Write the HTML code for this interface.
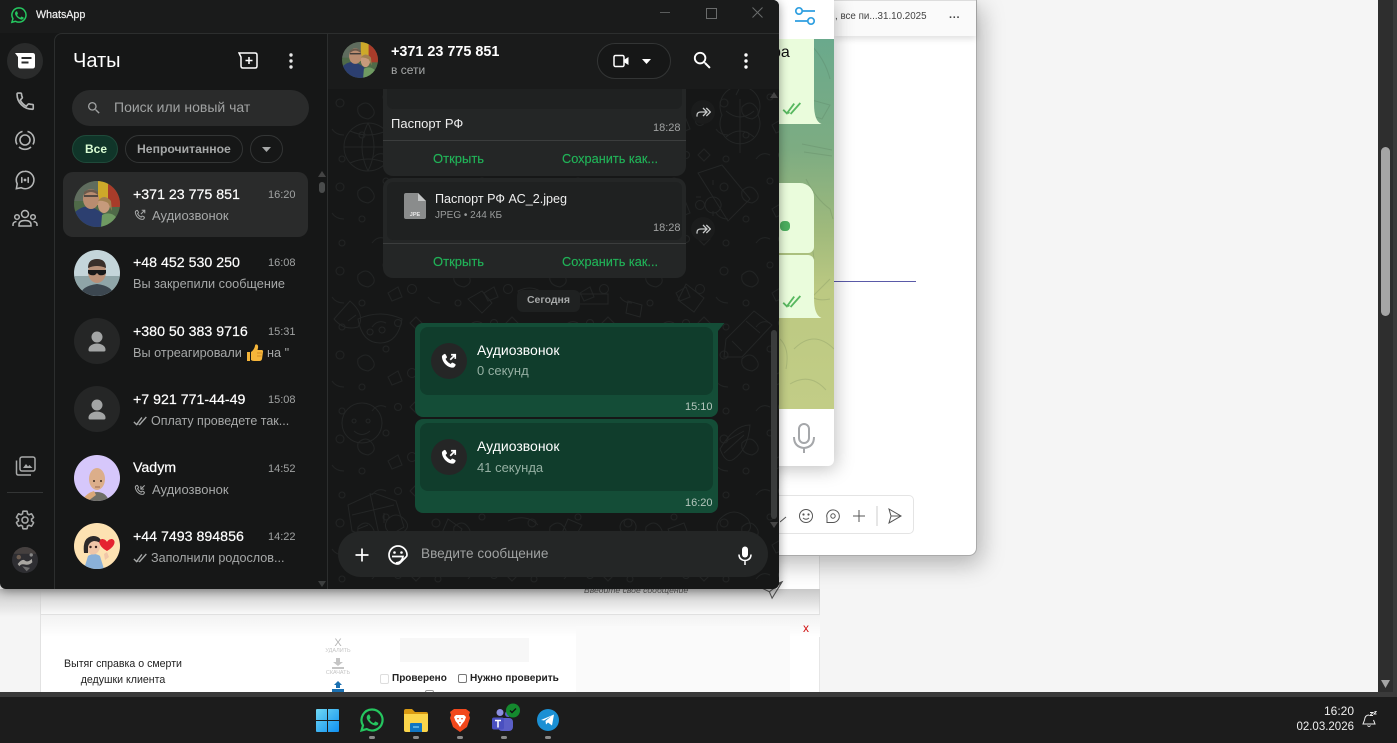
<!DOCTYPE html>
<html lang="ru"><head><meta charset="utf-8"><title>WhatsApp</title>
<style>
html,body{margin:0;padding:0;width:1397px;height:743px;overflow:hidden;background:#f5f5f5;font-family:"Liberation Sans","Noto Sans CJK SC",sans-serif}
div,span,svg{position:absolute}
.t{white-space:nowrap;line-height:16px;height:16px}
.n{color:#fff;font-size:14.2px;-webkit-text-stroke:.2px #fff}
.s{color:#a6a8a8;font-size:12.7px}
.m{color:#a0a2a2;font-size:11.5px}
.g{color:#21b358;font-size:13px;-webkit-text-stroke:.15px #21b358}
.tm{color:#a0a2a2;font-size:11px}
</style></head><body>

<svg width="0" height="0" style="left:0;top:0">
<defs>
<clipPath id="c"><circle cx="23" cy="23" r="23"/></clipPath>
<symbol id="av1" viewBox="0 0 46 46"><g clip-path="url(#c)"><rect width="46" height="46" fill="#4f6a48"/><rect x="23" width="12" height="24" fill="#cda92a"/><rect x="34" width="12" height="26" fill="#a83c2a"/><rect width="24" height="20" fill="#5f6c5e"/><path d="M0 46V32q8-8 16-6t14 8l2 12z" fill="#2c3f70"/><ellipse cx="17" cy="18" rx="8" ry="10" fill="#b98c70"/><path d="M10 14q7-6 14 0l0-3q-7-5-14 0z" fill="#6b5a4c"/><path d="M10 15h14" stroke="#333" stroke-width="1.500"/><ellipse cx="30" cy="24" rx="6" ry="8" fill="#c69a7c"/><path d="M24 20q6-8 13 0l1 10-4-8q-5-3-10-2z" fill="#a08050"/><path d="M27 46l1-12q8-4 14 2l0 10z" fill="#6f9a62"/></g></symbol>
<symbol id="av2" viewBox="0 0 46 46"><g clip-path="url(#c)"><rect width="46" height="46" fill="#c4d5da"/><rect y="26" width="46" height="20" fill="#8fa5a8"/><path d="M6 46q1-10 17-12 16 2 17 12z" fill="#3c4750"/><ellipse cx="23" cy="22" rx="9" ry="11" fill="#b89078"/><path d="M14 18q0-9 9-9t9 9q-9-4-18 0z" fill="#3a2f2a"/><path d="M14 20h18v3q-2 3-7 2l-2-2-2 2q-5 1-7-2z" fill="#17181a"/></g></symbol>
<symbol id="avp" viewBox="0 0 46 46"><g clip-path="url(#c)"><rect width="46" height="46" fill="#252626"/><circle cx="23" cy="19" r="5.500" fill="#a3a5a5"/><path d="M14.500 31.500c0-4 5-6 8.500-6s8.500 2 8.500 6v.5q0 1.500-1.500 1.500H16q-1.500 0-1.500-1.500z" fill="#a3a5a5"/></g></symbol>
<symbol id="av3" viewBox="0 0 46 46"><g clip-path="url(#c)"><rect width="46" height="46" fill="#d6c7fb"/><path d="M12 46q3-9 11-9 9 0 12 9z" fill="#6e6e66"/><path d="M9 44q4-6 11-8l2 4-8 6z" fill="#d9a878"/><ellipse cx="23" cy="24" rx="8" ry="11" fill="#dcae8a"/><circle cx="20" cy="26" r="1" fill="#3c2a20"/><circle cx="27" cy="26" r="1" fill="#3c2a20"/><path d="M21 32h5" stroke="#9a6a50"/></g></symbol>
<symbol id="av4" viewBox="0 0 46 46"><g clip-path="url(#c)"><rect width="46" height="46" fill="#fde2b2"/><path d="M10 46l4-13q6-4 12 0l4 13z" fill="#8ab0d8"/><ellipse cx="19" cy="23" rx="7" ry="8.500" fill="#f0c6a8"/><path d="M10 30q-2-16 9-17 9 0 9 10-2-5-8-5-5 1-6 6l0 6z" fill="#2d2a2a"/><circle cx="16.500" cy="24" r="1.200" fill="#392420"/><circle cx="22" cy="24" r="1.200" fill="#392420"/><path d="M33 28c-9-5-9-11-5-12 2 0 4 1 5 3 1-2 3-3 5-3 4 1 4 7-5 12z" fill="#e52330"/><path d="M30 31l3-2 2 5-4 3z" fill="#f0c6a8"/></g></symbol>
<symbol id="av5" viewBox="0 0 46 46"><g clip-path="url(#c)"><rect width="46" height="46" fill="#2e2e32"/><rect y="0" width="46" height="12" fill="#45403f"/><path d="M10 30q8-10 13-6t12-3l1 6q-6 6-13 4t-10 3z" fill="#a9a7a2"/><circle cx="12" cy="18" r="4" fill="#6c5c50"/><circle cx="34" cy="14" r="3" fill="#888"/><path d="M18 34l14 3-6 6z" fill="#6d6d6d"/></g></symbol>
<symbol id="call" viewBox="0 0 24 24"><path fill="currentColor" d="M6.600 3.600c.5-.2 1 0 1.300.5l1.500 2.700c.3.500.2 1.100-.2 1.500L7.900 9.500c.9 2.300 3.600 5 6.100 6.100l1.200-1.300c.4-.4 1-.5 1.500-.2l2.700 1.500c.5.3.7.8.5 1.300-.5 1.500-1.900 3.100-3.500 3.100C10.200 20 4 13.800 3.500 7.100 3.500 5.500 5.100 4.100 6.600 3.600z"/><path fill="none" stroke="currentColor" stroke-width="2" d="M13.500 10.500L19.500 4.500M14.500 4.500h5v5"/></symbol>
<symbol id="callo" viewBox="0 0 24 24"><path fill="none" stroke="currentColor" stroke-width="1.800" d="M6.600 4.200c.5-.2 1 0 1.300.5l1.300 2.300c.3.500.2 1.100-.2 1.500L7.900 9.500c.9 2.300 3.600 5 6.100 6.100l1.200-1.300c.4-.4 1-.5 1.500-.2l2.300 1.300c.5.3.7.8.5 1.300-.5 1.400-1.700 2.800-3.100 2.800C10.200 19.500 4.500 13.800 4 7.300 4 5.900 5.200 4.700 6.600 4.200z"/><path fill="none" stroke="currentColor" stroke-width="1.800" d="M13.500 10.500L20 4M15 3.800h5.200V9"/></symbol>
<symbol id="calli" viewBox="0 0 24 24"><path fill="none" stroke="currentColor" stroke-width="1.800" d="M6.600 4.200c.5-.2 1 0 1.300.5l1.300 2.300c.3.500.2 1.100-.2 1.500L7.900 9.500c.9 2.300 3.600 5 6.100 6.100l1.200-1.300c.4-.4 1-.5 1.500-.2l2.300 1.300c.5.3.7.8.5 1.300-.5 1.400-1.700 2.800-3.100 2.800C10.200 19.500 4.500 13.800 4 7.300 4 5.900 5.200 4.700 6.600 4.200z"/><path fill="none" stroke="currentColor" stroke-width="1.800" d="M20 4l-6.500 6.500M13.500 5v5.500H19"/></symbol>
<symbol id="dc" viewBox="0 0 18 12"><path fill="none" stroke="currentColor" stroke-width="1.500" d="M1 7l3 3 6-8M7 10.500L15 1.500M5 9l1 1"/></symbol>
<symbol id="fwd" viewBox="0 0 24 24"><path fill="none" stroke="#c8caca" stroke-width="1.900" d="M3 19v-2q0-5 6-5h8M12 6l6 6-6 6M17 6l6 6-6 6"/></symbol>
<symbol id="search" viewBox="0 0 24 24"><path fill="currentColor" d="M15.500 14h-.79l-.28-.27A6.470 6.470 0 0 0 16 9.500 6.500 6.500 0 1 0 9.500 16c1.610 0 3.090-.59 4.230-1.570l.27.28v.79l5 4.990L20.490 19l-4.990-5zm-6 0C7.010 14 5 11.990 5 9.500S7.010 5 9.500 5 14 7.010 14 9.500 11.990 14 9.500 14z"/></symbol>
<symbol id="dots" viewBox="0 0 4 16"><circle cx="2" cy="2" r="1.700" fill="currentColor"/><circle cx="2" cy="8" r="1.700" fill="currentColor"/><circle cx="2" cy="14" r="1.700" fill="currentColor"/></symbol>
<pattern id="wp" width="96" height="84" patternUnits="userSpaceOnUse"><g fill="none" stroke="#222424" stroke-width="1"><circle cx="12" cy="14" r="4"/><circle cx="58" cy="8" r="3"/><circle cx="84" cy="32" r="4.500"/><circle cx="34" cy="46" r="3"/><circle cx="70" cy="66" r="3.500"/><circle cx="14" cy="70" r="3"/><path d="M30 18q8-8 14 0t-4 12q-12-2-10-12zM60 36l10-6 4 10-10 4zM44 70q6-8 14-4M88 60l6 6-6 6-6-6zM4 40q4 6 12 6"/></g></pattern>
</defs>
</svg>

<!-- BACKGROUND PAGE -->
<div style="left:40px;top:0;width:780px;height:692px;background:#fff;border-left:1px solid #e2e2e2;border-right:1px solid #e6e6e6;box-sizing:border-box"></div>
<div style="left:40px;top:614px;width:780px;height:1px;background:#e2e2e2"></div>
<div style="left:0;top:589px;width:820px;height:28px;background:linear-gradient(#c8c8c8,rgba(255,255,255,0))"></div>
<div style="left:41px;top:615px;width:779px;height:22px;background:linear-gradient(#f2f2f2,#fff)"></div>
<div class="t" style="left:584px;top:582px;color:#555;font-size:8.600px;font-style:italic">Введите свое сообщение</div>
<svg style="left:762px;top:580px" width="22" height="20" viewBox="0 0 24 22"><path fill="none" stroke="#555" stroke-width="1.200" d="M22 2L2 10l6 3 3 7zM22 2L8 13"/></svg>
<div style="left:576px;top:626px;width:214px;height:66px;background:#fafafa"></div>
<div class="t" style="left:803px;top:620px;color:#d01010;font-size:12px">x</div>
<div class="t" style="left:63px;top:656px;width:120px;text-align:center;color:#222;font-size:10.600px">Вытяг справка о смерти</div>
<div class="t" style="left:63px;top:672px;width:120px;text-align:center;color:#222;font-size:10.600px">дедушки клиента</div>
<div class="t" style="left:318px;top:635px;width:40px;text-align:center;color:#b5b5b5;font-size:11px">X</div>
<div class="t" style="left:318px;top:643px;width:40px;text-align:center;color:#c5c5c5;font-size:5.500px">УДАЛИТЬ</div>
<svg style="left:331px;top:658px" width="14" height="12" viewBox="0 0 14 12"><path fill="#c5c5c5" d="M5 0h4v4h3L7 8 2 4h3zM1 9h12v2H1z"/></svg>
<div class="t" style="left:318px;top:665px;width:40px;text-align:center;color:#c5c5c5;font-size:5.500px">СКАЧАТЬ</div>
<svg style="left:331px;top:681px" width="14" height="11" viewBox="0 0 14 11"><path fill="#1a6fb0" d="M7 0l4 4H9v3H5V4H3zM1 8h12v3H1z"/></svg>
<div style="left:400px;top:638px;width:129px;height:24px;background:#f7f7f7"></div>
<div style="left:380px;top:674px;width:7px;height:8px;border:1px solid #ddd;border-radius:2px"></div>
<div class="t" style="left:392px;top:671px;color:#222;font-size:10px;font-weight:bold">Проверено</div>
<div style="left:458px;top:674px;width:7px;height:7px;border:1px solid #777;border-radius:2px"></div>
<div class="t" style="left:470px;top:671px;color:#222;font-size:10.100px;font-weight:bold">Нужно проверить</div>
<div style="left:425px;top:690px;width:7px;height:7px;border:1px solid #999;border-radius:2px"></div>

<!-- SCROLLBAR -->
<div style="left:1378px;top:0;width:15px;height:692px;background:#2e2e2e"></div>
<div style="left:1393px;top:0;width:4px;height:692px;background:#3a3a3a"></div>
<div style="left:1381px;top:147px;width:9px;height:169px;background:#a5a5a5;border-radius:5px"></div>
<svg style="left:1380px;top:680px" width="11" height="8" viewBox="0 0 11 8"><path d="M1 0h9L5.500 8z" fill="#a5a5a5"/></svg>

<!-- SECOND WINDOW -->
<div style="left:700px;top:0;width:276px;height:555px;background:#fff;border-right:1px solid #aaa;border-bottom:1px solid #aaa;border-radius:0 0 8px 0;box-shadow:4px 8px 24px rgba(0,0,0,.28);box-sizing:content-box"></div>
<div style="left:834px;top:0;width:142px;height:36px;background:#fafafa;border-top:1px solid #ddd;box-shadow:0 3px 6px rgba(0,0,0,.12);box-sizing:border-box"></div>
<div class="t" style="left:835px;top:9px;color:#444;font-size:9.800px">, все пи...31.10.2025</div>
<div class="t" style="left:949px;top:7px;color:#444;font-size:11px;letter-spacing:.7px;font-weight:bold">...</div>
<div style="left:834px;top:281px;width:82px;height:1px;background:#5a5aa8"></div>
<div style="left:760px;top:495px;width:154px;height:39px;border:1px solid #e4e4e4;border-radius:5px;box-sizing:border-box"></div>
<svg style="left:780px;top:500px" width="134" height="30" viewBox="0 0 134 30" fill="none" stroke="#555" stroke-width="1">
<path d="M0 22l6-5"/><circle cx="26" cy="16" r="6.500"/><circle cx="23.500" cy="14.500" r=".6" fill="#555"/><circle cx="28.500" cy="14.500" r=".6" fill="#555"/><path d="M23 18q3 2.500 6 0"/>
<path d="M47 22.500h6a6.300 6.300 0 1 0-6-4.500z"/><circle cx="53" cy="16" r="2.200"/>
<path d="M73 16h12M79 10v12"/><path d="M97 6v20" stroke="#ccc"/><path d="M109 9l12 7-12 7 2-7zM111 16h10"/>
</svg>

<!-- TELEGRAM WINDOW -->
<div style="left:700px;top:0;width:134px;height:466px;background:#fff;border-radius:0 0 6px 0;box-shadow:2px 3px 18px rgba(0,0,0,.25);overflow:hidden">
 <div style="left:0;top:39px;width:134px;height:370px;background:linear-gradient(#6aa98c,#7dac82 30%,#a0ba7c 52%,#bcc982 68%,#c2cd86)"></div>
 <svg style="left:80px;top:39px" width="54" height="370" viewBox="0 0 54 370" fill="none" stroke="rgba(60,90,60,.16)" stroke-width="1">
  <path d="M20 10q14 10 4 30M28 60l22 6-8 14-18-6zM22 105l30 6M24 113l28 4M26 140q10 20 24 30l3 10M8 160l14 20M0 190q20-10 30 0l4 30M6 240q14-4 20 10t24 10M20 270l30-30M14 310q20-20 40 0M10 345q20-12 36 6M0 300q10 10 6 30M30 5q15 15 20 35"/>
 </svg>
 <div style="left:60px;top:39px;width:54px;height:85px;background:#eafcdc"></div>
 <svg style="left:114px;top:104px" width="8" height="20" viewBox="0 0 8 20"><path d="M0 0v20h7.500Q0 17 0 0z" fill="#eafcdc"/></svg>
 <div style="left:60px;top:183px;width:54px;height:70px;background:#eafcdc;border-radius:0 14px 6px 0"></div>
 <div style="left:60px;top:255px;width:54px;height:63px;background:#eafcdc;border-radius:0 6px 0 0"></div>
 <svg style="left:114px;top:298px" width="8" height="20" viewBox="0 0 8 20"><path d="M0 0v20h7.500Q0 17 0 0z" fill="#eafcdc"/></svg>
 <div style="left:80px;top:221px;width:10px;height:10px;background:#4caf5f;border-radius:4px"></div>
 <svg style="left:82px;top:101px;color:#58b860" width="22" height="15"><use href="#dc" width="22" height="15"/></svg>
 <svg style="left:82px;top:294px;color:#58b860" width="22" height="15"><use href="#dc" width="22" height="15"/></svg>
 <div class="t" style="left:72px;top:45px;color:#111;font-size:16px">ра</div>
 <svg style="left:92px;top:4px" width="26" height="24" viewBox="0 0 26 24" fill="none" stroke="#2f9fe0" stroke-width="1.700"><circle cx="7" cy="7" r="3.200"/><path d="M10.500 7h12.500M3 17h12.500"/><circle cx="19" cy="17" r="3.200"/></svg>
 <svg style="left:92px;top:422px" width="24" height="32" viewBox="0 0 24 32" fill="none" stroke="#a5a7aa" stroke-width="2"><rect x="7" y="2" width="10" height="19" rx="5"/><path d="M2 15q0 10 10 11 10-1 10-11M12 26v5"/></svg>
</div>

<!-- WHATSAPP WINDOW -->
<div style="left:0;top:0;width:779px;height:589px;background:#161717;border-radius:0 6px 6px 6px;overflow:hidden;box-shadow:0 2px 10px rgba(0,0,0,.4)">
 <!-- title bar -->
 <div style="left:0;top:0;width:779px;height:33px;background:#1a1b1b"></div>
 <svg style="left:10px;top:6px" width="18" height="18" viewBox="0 0 24 24"><path fill="none" stroke="#25c65f" stroke-width="2" d="M12 2.500a9.500 9.500 0 0 0-8.100 14.400L2.500 21.700l4.900-1.300A9.500 9.500 0 1 0 12 2.500z"/><path fill="#25c65f" d="M8.800 7c-.3 0-.7.100-1 .5-.4.400-1.100 1.100-1.100 2.500s1 2.800 1.200 3c.1.200 2 3.100 4.900 4.300 2.400 1 2.900.8 3.400.7.500 0 1.700-.7 1.900-1.300.2-.6.200-1.200.2-1.300-.1-.1-.3-.2-.6-.3l-2-1c-.3-.1-.5-.1-.7.200l-.9 1.100c-.2.200-.3.200-.6.100-.3-.2-1.200-.5-2.300-1.400-.9-.8-1.400-1.700-1.600-2-.2-.3 0-.4.100-.6l.5-.5.3-.5c.1-.2 0-.4 0-.5L9.600 7.500C9.400 7 9.200 7 9 7z"/></svg>
 <div class="t" style="left:36px;top:7px;color:#f0f0f0;font-size:10.700px;-webkit-text-stroke:.2px #f0f0f0">WhatsApp</div>
 <div style="left:660px;top:12px;width:10px;height:1px;background:#5a5c5c"></div>
 <div style="left:706px;top:8px;width:9px;height:9px;border:1px solid #6a6c6c"></div>
 <svg style="left:752px;top:7px" width="11" height="11" viewBox="0 0 11 11"><path d="M.5.500l10 10M10.500.500l-10 10" stroke="#6a6c6c"/></svg>

 <!-- rail icons -->
 <div style="left:7px;top:43px;width:36px;height:36px;border-radius:50%;background:#2a2b2b"></div>
 <svg style="left:14px;top:52px" width="22" height="18" viewBox="0 0 22 18"><path fill="#fff" d="M1 1h17.500Q21 1 21 3.500V14q0 2.500-2.500 2.500h-12Q4 16.500 4 14V5z"/><path d="M7.500 6h10M7.500 10.500h7" stroke="#2a2b2b" stroke-width="2"/></svg>
 <svg style="left:14px;top:90px" width="22" height="22" viewBox="0 0 24 24"><path fill="none" stroke="#b4b6b6" stroke-width="1.800" d="M20 15.800c-1.250 0-2.450-.2-3.570-.57a1.020 1.020 0 0 0-1.020.24l-2 2.200a15.050 15.050 0 0 1-6.590-6.590l2-2.210a.96.96 0 0 0 .25-1C8.300 6.700 8.200 5.500 8.200 4.300c0-.55-.45-1-1-1H4.300c-.55 0-1 .45-1 1 0 9.390 7.310 16.700 16.700 16.700.55 0 1-.45 1-1v-3.200c0-.55-.45-1-1-1z"/></svg>
 <svg style="left:14px;top:129px" width="22" height="22" viewBox="0 0 22 22" fill="none" stroke="#b4b6b6" stroke-width="1.600"><circle cx="11" cy="11" r="5"/><path d="M3 15.500A9 9 0 0 1 8.500 2.400M13.500 2.400A9 9 0 0 1 19 15.500M5 18a9 9 0 0 0 12 0"/></svg>
 <svg style="left:14px;top:169px" width="22" height="22" viewBox="0 0 24 24" fill="none" stroke="#b4b6b6" stroke-width="1.700"><path d="M12 2.500a9.500 9.500 0 0 0-8.500 13.700L2.600 21.400l5.200-1A9.500 9.500 0 1 0 12 2.500z"/><circle cx="12" cy="12" r="1.500" fill="#b4b6b6" stroke="none"/><path d="M8.500 9.500v5M15.500 9.500v5" stroke-linecap="round"/></svg>
 <svg style="left:12px;top:208px" width="26" height="20" viewBox="0 0 26 20" fill="none" stroke="#b4b6b6" stroke-width="1.500"><circle cx="13" cy="6" r="3.500"/><path d="M7 18v-1.500q0-4 6-4t6 4V18z"/><circle cx="5" cy="9" r="2.300"/><circle cx="21" cy="9" r="2.300"/><path d="M1 18v-1.500q0-2.500 3.500-3M25 18v-1.500q0-2.500-3.500-3"/></svg>
 <svg style="left:15px;top:456px" width="21" height="20" viewBox="0 0 21 20" fill="none" stroke="#a8aaaa" stroke-width="1.500"><rect x="5" y="1" width="15" height="14" rx="2"/><path d="M1.500 4.500V17q0 2 2 2H16"/><path d="M8 12l3-4 2 2.500 1.500-1.500 3 3z" fill="#a8aaaa" stroke="none"/></svg>
 <div style="left:7px;top:492px;width:36px;height:1px;background:#333535"></div>
 <svg style="left:14px;top:509px" width="22" height="22" viewBox="0 0 24 24" fill="none" stroke="#a8aaaa" stroke-width="1.700"><path d="M19.140 12.940c.04-.3.060-.61.060-.94 0-.32-.02-.64-.07-.94l2.030-1.580a.49.49 0 0 0 .12-.61l-1.920-3.320a.488.488 0 0 0-.59-.22l-2.390.96c-.5-.38-1.030-.7-1.620-.94l-.36-2.540a.484.484 0 0 0-.48-.41h-3.840c-.24 0-.43.17-.47.41l-.36 2.540c-.59.24-1.130.57-1.620.94l-2.390-.96c-.22-.08-.47 0-.59.22L2.740 8.870c-.12.21-.08.47.12.61l2.030 1.580c-.05.3-.09.63-.09.94s.02.64.07.94l-2.030 1.580a.49.49 0 0 0-.12.61l1.920 3.320c.12.22.37.29.59.22l2.390-.96c.5.38 1.030.7 1.620.94l.36 2.540c.05.24.24.41.48.41h3.840c.24 0 .44-.17.47-.41l.36-2.540c.59-.24 1.130-.56 1.620-.94l2.390.96c.22.08.47 0 .59-.22l1.920-3.320c.12-.22.07-.47-.12-.61l-2.010-1.580z"/><circle cx="12" cy="12" r="3.300"/></svg>
 <svg style="left:12px;top:547px" width="26" height="26"><use href="#av5" width="26" height="26"/></svg>

 <!-- list panel -->
 <div style="left:54px;top:33px;width:274px;height:556px;background:#161717;border-left:1px solid #2c2e2e;border-top:1px solid #2c2e2e;border-right:1px solid #2c2e2e;border-radius:8px 0 0 0;box-sizing:border-box"></div>
 <div class="t" style="left:73px;top:50px;height:22px;line-height:22px;color:#fff;font-size:20px">Чаты</div>
 <svg style="left:238px;top:52px" width="20" height="17" viewBox="0 0 20 17" fill="none" stroke="#fff" stroke-width="1.500"><path d="M1 1h16q2 0 2 2v11q0 2-2 2H5q-2 0-2-2V5z"/><path d="M11 5v7M7.500 8.500h7"/></svg>
 <svg style="left:289px;top:53px;color:#e8e8e8" width="4" height="16"><use href="#dots" width="4" height="16"/></svg>
 <div style="left:72px;top:90px;width:237px;height:36px;background:#2a2b2b;border-radius:18px"></div>
 <svg style="left:86px;top:100px;color:#a0a2a2" width="16" height="16"><use href="#search" width="16" height="16"/></svg>
 <div class="t" style="left:114px;top:99px;color:#a0a2a2;font-size:14px">Поиск или новый чат</div>
 <div style="left:72px;top:135px;width:46px;height:28px;background:#103529;border:1px solid #1f4a3a;border-radius:14px;box-sizing:border-box"></div>
 <div class="t" style="left:85px;top:141px;color:#d9fdd3;font-size:12px;font-weight:bold">Все</div>
 <div style="left:125px;top:135px;width:118px;height:28px;border:1px solid #333535;border-radius:14px;box-sizing:border-box"></div>
 <div class="t" style="left:137px;top:141px;color:#a6a8a8;font-size:12.200px;font-weight:bold">Непрочитанное</div>
 <div style="left:250px;top:135px;width:33px;height:28px;border:1px solid #333535;border-radius:14px;box-sizing:border-box"></div>
 <svg style="left:262px;top:147px" width="9" height="5" viewBox="0 0 9 5"><path d="M0 0h9L4.500 5z" fill="#a6a8a8"/></svg>

 <div style="left:63px;top:172px;width:245px;height:65px;background:#2a2b2b;border-radius:10px"></div>
 <svg style="left:74px;top:181px" width="46" height="46"><use href="#av1" width="46" height="46"/></svg>
 <svg style="left:74px;top:250px" width="46" height="46"><use href="#av2" width="46" height="46"/></svg>
 <svg style="left:74px;top:318px" width="46" height="46"><use href="#avp" width="46" height="46"/></svg>
 <svg style="left:74px;top:386px" width="46" height="46"><use href="#avp" width="46" height="46"/></svg>
 <svg style="left:74px;top:455px" width="46" height="46"><use href="#av3" width="46" height="46"/></svg>
 <svg style="left:74px;top:523px" width="46" height="46"><use href="#av4" width="46" height="46"/></svg>

 <div class="t n" style="left:133px;top:187px">+371 23 775 851</div><div class="t tm" style="left:268px;top:187px">16:20</div>
 <svg style="left:133px;top:208px;color:#a6a8a8" width="14" height="14"><use href="#callo" width="14" height="14"/></svg>
 <div class="t s" style="left:152px;top:208px;font-size:13px">Аудиозвонок</div>

 <div class="t n" style="left:133px;top:255px">+48 452 530 250</div><div class="t tm" style="left:268px;top:255px">16:08</div>
 <div class="t s" style="left:133px;top:276px">Вы закрепили сообщение</div>

 <div class="t n" style="left:133px;top:324px">+380 50 383 9716</div><div class="t tm" style="left:268px;top:324px">15:31</div>
 <div class="t s" style="left:133px;top:345px">Вы отреагировали</div>
 <svg style="left:246px;top:344px" width="18" height="18" viewBox="0 0 18 18"><path fill="#f5b53a" d="M5 8q3-2 4-6 0-2 2-1.500 2 1 .5 5.500H16q1.500.5 1 2l-1 7q-.5 2-2.500 2H8q-2 0-3-1zM1 8h3v9H1z"/><path d="M11 9h5M11 12h4.500" stroke="#c9801f" stroke-width=".8"/></svg>
 <div style="left:267px;top:345px;width:23px;height:16px;overflow:hidden"><div class="t s" style="left:0;top:0">на "Ч</div></div>

 <div class="t n" style="left:133px;top:392px">+7 921 771-44-49</div><div class="t tm" style="left:268px;top:392px">15:08</div>
 <svg style="left:133px;top:415px;color:#a6a8a8" width="16" height="12"><use href="#dc" width="16" height="12"/></svg>
 <div class="t s" style="left:151px;top:413px;font-size:12.500px">Оплату проведете так...</div>

 <div class="t n" style="left:133px;top:460px">Vadym</div><div class="t tm" style="left:268px;top:461px">14:52</div>
 <svg style="left:133px;top:483px;color:#a6a8a8" width="14" height="14"><use href="#calli" width="14" height="14"/></svg>
 <div class="t s" style="left:152px;top:482px;font-size:13px">Аудиозвонок</div>

 <div class="t n" style="left:133px;top:529px">+44 7493 894856</div><div class="t tm" style="left:268px;top:529px">14:22</div>
 <svg style="left:133px;top:552px;color:#a6a8a8" width="16" height="12"><use href="#dc" width="16" height="12"/></svg>
 <div class="t s" style="left:151px;top:550px;font-size:12.600px">Заполнили родослов...</div>

 <svg style="left:318px;top:171px" width="8" height="6" viewBox="0 0 8 6"><path d="M4 0l4 6H0z" fill="#444"/></svg>
 <div style="left:319px;top:182px;width:6px;height:11px;background:#4a4c4c;border-radius:3px"></div>
 <svg style="left:318px;top:581px" width="8" height="6" viewBox="0 0 8 6"><path d="M0 0h8L4 6z" fill="#3c3e3e"/></svg>

 <!-- wallpaper -->
 <svg style="left:328px;top:89px" width="451" height="500" viewBox="0 0 451 500">
  <rect width="451" height="500" fill="url(#wp)"/>
  <g fill="none" stroke="#242626" stroke-width="1">
  <circle cx="40" cy="58" r="24"/><path d="M16 58h48M40 34q-12 24 0 48M40 34q12 24 0 48M22 42q18 8 36 0M22 74q18-8 36 0"/>
  <path d="M22 212q16 14 8 26-14 4-24-8zM28 226l-8 6"/>
  <path d="M30 230q22-10 44 0-4 24-22 24t-22-24zM42 240a3 3 0 1 0 .1 0M54 238a3 3 0 1 0 .1 0"/>
  <path d="M14 334a20 20 0 1 0 40 0a20 20 0 1 0-40 0M26 330a2 2 0 1 0 .1 0M40 330a2 2 0 1 0 .1 0M26 342q8 7 16 0"/>
  <path d="M20 416l26-12 22 8 8 26-24 14-28-10zM42 404l10 46M24 426l42-10M30 440l10-4M56 424v10"/>
  <path d="M394 26a20 20 0 1 0 36 0a20 20 0 1 0-36 0zM412 10v54M398 22q14 12 28 0M398 48q14-12 28 0M408 6l3-6"/>
  <path d="M370 84l24-8 28 34-22 22zM385 108a8 8 0 1 0 .1 0M385 96v-5M385 122v5M373 108h-5"/>
  <path d="M398 250l28-28 18 14-30 32h-18zM404 252l10 10M418 232l14 12"/>
  <path d="M392 360q14-24 30-24-2 24-16 34-8 6-14-10zM398 352l18-10M396 364l20-18"/>
  <path d="M392 430q14-14 28 0 8 14-10 16h-18q-6-8 0-16zM360 400l16 10-8 14M340 440l16-6 6 16-14 8z"/>
  <path d="M358 195l18 14-10 14-16-12zM360 250q14 14 4 26"/>
  <path d="M140 210l14-8 10 12-10 10zM190 202q12-6 22 0l-4 14-14 0zM250 205h30v10h-30zM300 212l14 4-2 12-14-4z"/>
  <path d="M60 430q8-8 16 0t-2 14h-12q-8-6-2-14zM120 430l14 10-6 12-14-8zM180 432q18-8 30 4M240 430l14 6-8 14-12-6zM300 430a8 8 0 1 0 .1 0"/>
  </g>
 </svg>

 <!-- chat header -->
 <div style="left:328px;top:33px;width:451px;height:56px;background:#1a1b1b;border-top:1px solid #2c2e2e;box-sizing:border-box"></div>
 <svg style="left:342px;top:42px" width="36" height="36"><use href="#av1" width="36" height="36"/></svg>
 <div class="t" style="left:391px;top:44px;color:#fff;font-size:14.400px;font-weight:bold">+371 23 775 851</div>
 <div class="t" style="left:391px;top:62px;color:#a6a8a8;font-size:12px">в сети</div>
 <div style="left:597px;top:43px;width:74px;height:36px;border:1px solid #333535;border-radius:18px;box-sizing:border-box;background:#161717"></div>
 <svg style="left:613px;top:54px" width="16" height="14" viewBox="0 0 16 14" fill="none" stroke="#fff" stroke-width="1.500"><rect x="1" y="1.500" width="10" height="11" rx="1.500"/><path d="M11.500 5.500l4-2.500v8l-4-2.500z" fill="#fff" stroke="none"/></svg>
 <svg style="left:642px;top:59px" width="9" height="5" viewBox="0 0 9 5"><path d="M0 0h9L4.500 5z" fill="#fff"/></svg>
 <svg style="left:691px;top:49px;color:#fff" width="23" height="23"><use href="#search" width="23" height="23"/></svg>
 <svg style="left:744px;top:53px;color:#fff" width="4" height="16"><use href="#dots" width="4" height="16"/></svg>

 <!-- file bubbles -->
 <div style="left:383px;top:89px;width:303px;height:87px;background:#242626;border-radius:0 0 10px 10px"></div>
 <div style="left:387px;top:89px;width:295px;height:20px;background:#1f2121;border-radius:0 0 6px 6px"></div>
 <div class="t" style="left:391px;top:116px;color:#eee;font-size:13px">Паспорт РФ</div>
 <div class="t tm" style="left:653px;top:120px">18:28</div>
 <div style="left:383px;top:140px;width:303px;height:1px;background:#3b3d3d"></div>
 <div class="t g" style="left:433px;top:151px">Открыть</div>
 <div class="t g" style="left:562px;top:151px;font-size:12.750px">Сохранить как...</div>

 <div style="left:383px;top:178px;width:303px;height:100px;background:#242626;border-radius:10px"></div>
 <div style="left:387px;top:182px;width:295px;height:58px;background:#1f2121;border-radius:6px"></div>
 <svg style="left:404px;top:193px" width="22" height="26" viewBox="0 0 22 26"><path fill="#8a8c8c" d="M2 0h12l8 8v16q0 2-2 2H2q-2 0-2-2V2q0-2 2-2z"/><path fill="#c4c6c6" d="M14 0l8 8h-8z"/></svg>
 <div class="t" style="left:405px;top:207px;width:20px;text-align:center;color:#e8e8e8;font-size:5.500px;font-weight:bold">JPE</div>
 <div class="t" style="left:435px;top:191px;color:#eee;font-size:12.600px">Паспорт РФ АС_2.jpeg</div>
 <div class="t" style="left:435px;top:208px;color:#9a9c9c;font-size:10px">JPEG • 244 КБ</div>
 <div class="t tm" style="left:653px;top:220px">18:28</div>
 <div style="left:383px;top:243px;width:303px;height:1px;background:#3b3d3d"></div>
 <div class="t g" style="left:433px;top:254px">Открыть</div>
 <div class="t g" style="left:562px;top:254px;font-size:12.750px">Сохранить как...</div>

 <div style="left:691px;top:100px;width:24px;height:24px;border-radius:50%;background:#1b1c1c"></div>
 <div style="left:691px;top:217px;width:24px;height:24px;border-radius:50%;background:#1b1c1c"></div>
 <svg style="left:695px;top:104px" width="16" height="16"><use href="#fwd" width="16" height="16"/></svg>
 <svg style="left:695px;top:221px" width="16" height="16"><use href="#fwd" width="16" height="16"/></svg>
 <svg style="left:770px;top:92px" width="8" height="6" viewBox="0 0 8 6"><path d="M4 0l4 6H0z" fill="#444"/></svg>

 <div style="left:517px;top:290px;width:63px;height:22px;background:#1f2121;border-radius:6px"></div>
 <div class="t" style="left:517px;top:292px;width:63px;text-align:center;color:#a6a8a8;font-size:10.500px;font-weight:bold">Сегодня</div>

 <!-- green bubbles -->
 <svg style="left:710px;top:323px" width="15" height="14" viewBox="0 0 15 14"><path d="M0 0h14.500L8 8v6H0z" fill="#144d37"/></svg>
 <div style="left:415px;top:323px;width:303px;height:94px;background:#144d37;border-radius:8px 0 8px 8px"></div>
 <div style="left:420px;top:327px;width:293px;height:68px;background:#103d2c;border-radius:8px"></div>
 <div style="left:431px;top:343px;width:36px;height:36px;background:#252626;border-radius:50%"></div>
 <svg style="left:439px;top:351px;color:#fff" width="20" height="20"><use href="#call" width="20" height="20"/></svg>
 <div class="t" style="left:477px;top:342px;color:#fff;font-size:14px">Аудиозвонок</div>
 <div class="t" style="left:477px;top:363px;color:#95b0a3;font-size:13px">0 секунд</div>
 <div class="t" style="left:685px;top:399px;color:#b5c6bd;font-size:11px">15:10</div>

 <div style="left:415px;top:419px;width:303px;height:94px;background:#144d37;border-radius:8px"></div>
 <div style="left:420px;top:423px;width:293px;height:68px;background:#103d2c;border-radius:8px"></div>
 <div style="left:431px;top:439px;width:36px;height:36px;background:#252626;border-radius:50%"></div>
 <svg style="left:439px;top:447px;color:#fff" width="20" height="20"><use href="#call" width="20" height="20"/></svg>
 <div class="t" style="left:477px;top:438px;color:#fff;font-size:14px">Аудиозвонок</div>
 <div class="t" style="left:477px;top:460px;color:#95b0a3;font-size:13px">41 секунда</div>
 <div class="t" style="left:685px;top:495px;color:#b5c6bd;font-size:11px">16:20</div>

 <div style="left:771px;top:330px;width:6px;height:189px;background:#3a3c3c;border-radius:3px"></div>
 <svg style="left:770px;top:522px" width="8" height="6" viewBox="0 0 8 6"><path d="M0 0h8L4 6z" fill="#444"/></svg>

 <!-- input -->
 <div style="left:338px;top:531px;width:430px;height:46px;background:#242626;border-radius:23px"></div>
 <svg style="left:354px;top:547px" width="16" height="16" viewBox="0 0 16 16"><path d="M8 1.500v13M1.500 8h13" stroke="#fff" stroke-width="1.700"/></svg>
 <svg style="left:388px;top:545px" width="20" height="20" viewBox="0 0 20 20" fill="none" stroke="#fff" stroke-width="1.700"><path d="M10 1a9 9 0 1 0 0 18c.8 0 1.300-.2 2-1l6-6c.8-.7 1-1.200 1-2a9 9 0 0 0-9-9z"/><path d="M4 11.500h11q-1 6-7 6.500"/><circle cx="6.500" cy="7.500" r="1.300" fill="#fff" stroke="none"/><circle cx="13.500" cy="7.500" r="1.300" fill="#fff" stroke="none"/></svg>
 <div class="t" style="left:421px;top:546px;color:#a0a2a2;font-size:13.600px">Введите сообщение</div>
 <svg style="left:738px;top:546px" width="14" height="19" viewBox="0 0 14 19" fill="none"><rect x="4" y="0.500" width="6" height="11" rx="3" fill="#fff"/><path d="M1 8.500q0 5.500 6 6 6-.5 6-6M7 14.500V19" stroke="#fff" stroke-width="1.500"/></svg>
</div>

<!-- TASKBAR -->
<div style="left:0;top:692px;width:1397px;height:5px;background:#3a3a3a"></div>
<div style="left:0;top:697px;width:1397px;height:46px;background:#1c1c1c"></div>
<svg style="left:316px;top:709px" width="23" height="23" viewBox="0 0 23 23"><defs><linearGradient id="w" x1="0" y1="0" x2="1" y2="1"><stop offset="0" stop-color="#6fd8f5"/><stop offset="1" stop-color="#0f8fef"/></linearGradient></defs><path fill="url(#w)" d="M0 1q0-1 1-1h10v11H0zM12 0h10q1 0 1 1v10H12zM0 12h11v11H1q-1 0-1-1zM12 12h11v10q0 1-1 1H12z"/></svg>
<svg style="left:360px;top:708px" width="24" height="24" viewBox="0 0 24 24"><path fill="none" stroke="#25c65f" stroke-width="2.200" d="M12 1.500a10.500 10.500 0 0 0-9 15.900L1.500 22.500l5.300-1.400A10.500 10.500 0 1 0 12 1.500z"/><path fill="#25c65f" d="M8.800 6.500c-.3 0-.7.100-1 .5-.4.400-1.100 1.100-1.100 2.500s1 2.800 1.200 3c.1.200 2 3.100 4.900 4.300 2.400 1 2.900.8 3.400.7.500 0 1.700-.7 1.900-1.300.2-.6.2-1.200.2-1.300-.1-.1-.3-.2-.6-.3l-2-1c-.3-.1-.5-.1-.7.2l-.9 1.100c-.2.200-.3.200-.6.100-.3-.2-1.200-.5-2.300-1.400-.9-.8-1.400-1.700-1.600-2-.2-.3 0-.4.100-.6l.5-.5.3-.5c.1-.2 0-.4 0-.5L9.600 7C9.400 6.500 9.200 6.500 9 6.500z"/></svg>
<svg style="left:404px;top:709px" width="24" height="23" viewBox="0 0 24 23"><path fill="#d99a12" d="M0 2q0-2 2-2h6l3 3h11q2 0 2 2v4H0z"/><path fill="#fbd54a" d="M0 5h24v16q0 2-2 2H2q-2 0-2-2z"/><path fill="#0f75c4" d="M7 14h10q1 0 1 1v8H6v-8q0-1 1-1z"/><path d="M9 18h6" stroke="#6cc0f0" stroke-width="1.500"/></svg>
<svg style="left:449px;top:708px" width="22" height="24" viewBox="0 0 22 24"><path fill="#f2481c" d="M5 1h12l4 3-1 3 1 3-3 9-7 5-7-5-3-9 1-3-1-3z"/><path fill="#fff" d="M7 7h8l2 2-1.500 4-2.500 3-2 3-2-3-2.500-3L5 9z"/><path fill="#f2481c" d="M8 10h2l-1 2zM12 10h2l-1 2zM10 14h2l-1 2z"/></svg>
<svg style="left:491px;top:703px" width="30" height="30" viewBox="0 0 30 30"><circle cx="9" cy="9.500" r="3.500" fill="#8c8fe0"/><rect x="7" y="15" width="15" height="13" rx="4" fill="#5b5fc7"/><circle cx="17" cy="11" r="3" fill="#5b5fc7"/><rect x="1" y="14.500" width="12" height="12" rx="2" fill="#4a50c0"/><path d="M4 17.500h6M7 17.500v7" stroke="#fff" stroke-width="1.500"/><circle cx="22" cy="7.500" r="7" fill="#14892e"/><path d="M19 7.500l2 2 4-4" fill="none" stroke="#111" stroke-width="1.400"/></svg>
<svg style="left:537px;top:709px" width="22" height="22" viewBox="0 0 22 22"><circle cx="11" cy="11" r="11" fill="#1b90d4"/><path fill="#fff" d="M4 11l13-5.500-2 11-4-3-2 2-.5-3.500 6-5-7.500 4.500z"/></svg>
<div style="left:369px;top:736px;width:6px;height:3px;background:#8a8a8a;border-radius:2px"></div>
<div style="left:413px;top:736px;width:6px;height:3px;background:#8a8a8a;border-radius:2px"></div>
<div style="left:457px;top:736px;width:6px;height:3px;background:#8a8a8a;border-radius:2px"></div>
<div style="left:501px;top:736px;width:6px;height:3px;background:#8a8a8a;border-radius:2px"></div>
<div style="left:545px;top:736px;width:6px;height:3px;background:#8a8a8a;border-radius:2px"></div>
<div class="t" style="left:1254px;top:703px;width:100px;text-align:right;color:#eee;font-size:12px">16:20</div>
<div class="t" style="left:1254px;top:719px;width:100px;text-align:right;color:#eee;font-size:11.500px">02.03.2026</div>
<svg style="left:1362px;top:711px" width="15" height="18" viewBox="0 0 15 18" fill="none" stroke="#eee" stroke-width="1"><path d="M7 4q-4 0-4.500 5L1 13h12l-1.500-4"/><path d="M5.500 14.500q1.500 2 3 0M8 1.500h3l-3 3h3M12 0h2.500L12 3h2.500"/></svg>
</body></html>
